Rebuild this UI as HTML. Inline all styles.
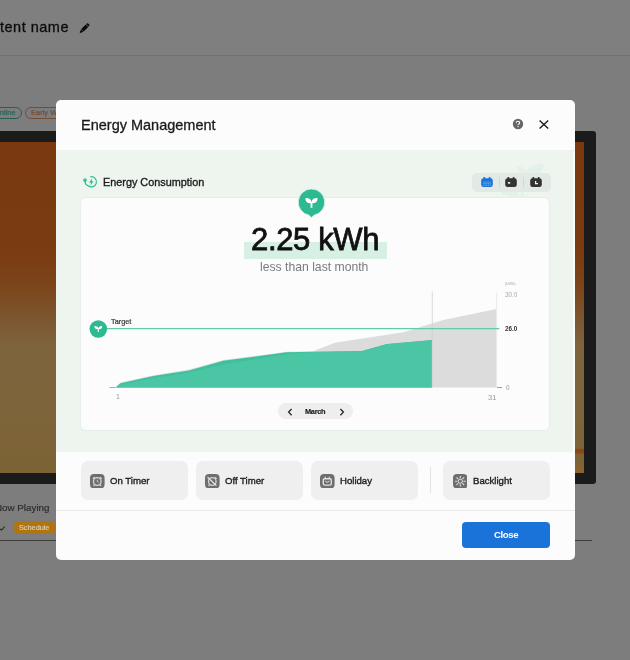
<!DOCTYPE html>
<html><head><meta charset="utf-8">
<style>
*{box-sizing:border-box;margin:0;padding:0}
html,body{width:630px;height:660px;overflow:hidden}
body{background:#fff;font-family:"Liberation Sans",sans-serif;position:relative;color:#111}
.abs{position:absolute}
.t{position:absolute;white-space:nowrap;line-height:1;will-change:transform}
#bg{position:absolute;left:0;top:0;width:630px;height:660px;background:#fafafa}
#overlay{position:absolute;left:0;top:0;width:630px;height:660px;background:rgba(0,0,0,.5)}
#modal{position:absolute;left:56px;top:100px;width:519px;height:460px;background:#fcfcfc;border-radius:5px;overflow:hidden}
.btn{position:absolute;top:361px;width:107px;height:39px;background:#efefef;border-radius:7px}
.btn .ic{position:absolute;left:9.7px;top:12.5px}
.btn .lb{will-change:transform;position:absolute;left:29.5px;top:14.5px;font-size:9.6px;line-height:1;color:#1c1c1c;white-space:nowrap;-webkit-text-stroke:.35px #1c1c1c}
</style></head><body>
<div id="bg">
  <div class="abs" style="left:0;top:0;width:630px;height:55px;background:#fff"></div>
  <div class="t" id="cname" style="left:.4px;top:20.2px;font-size:14.5px;letter-spacing:.5px;color:#151515;-webkit-text-stroke:.3px #151515">tent name</div>
  <svg class="abs" style="left:78.6px;top:22.6px" width="11" height="11" viewBox="0 0 11 11"><g transform="translate(5.4 5.3) rotate(45)" fill="#111"><path d="M-1.7 -4.2 V-5 Q-1.7 -6 -.7 -6 H.7 Q1.7 -6 1.7 -5 V-4.2 Z"/><rect x="-1.7" y="-3.7" width="3.4" height="6.4"/><path d="M-1.7 3.1 H1.7 L.3 6.2 Q0 6.8 -.3 6.2 Z"/></g></svg>
  <div class="abs" style="left:0;top:55px;width:630px;height:1px;background:#e2e2e2"></div>
  <div class="abs" style="left:-20px;top:106.5px;width:42px;height:12.5px;border:1.2px solid #4fc3a5;border-radius:7px"></div>
  <div class="t" id="online" style="left:-6px;top:109px;font-size:7.5px;color:#4fc3a5;-webkit-text-stroke:.2px #4fc3a5">Online</div>
  <div class="abs" style="left:25px;top:106.5px;width:62px;height:12.5px;border:1.2px solid #e09a68;border-radius:7px"></div>
  <div class="t" id="early" style="left:30.5px;top:109px;font-size:7.5px;color:#e09a68;-webkit-text-stroke:.2px #e09a68">Early Warning</div>
  <div class="abs" style="left:-10px;top:131px;width:606px;height:353px;background:#363636;border-radius:3px"></div>
  <div class="abs" style="left:-10px;top:142px;width:594px;height:331px;background:linear-gradient(#f4721f 0%,#f67824 34%,#f88c36 44%,#f8b062 54%,#fdc97c 62%,#fbc975 80%,#f9c66a 100%)"></div>
  <div class="t" id="nowp" style="left:-5px;top:503px;font-size:9.8px;color:#5a5a5a;-webkit-text-stroke:.2px #5a5a5a">Now Playing</div>
  <div class="abs" style="left:0;top:540px;width:592px;height:1px;background:#777"></div>
</div>
<div id="overlay"></div>
<div class="abs" style="left:575px;top:447.5px;width:9px;height:7px;background:linear-gradient(#86602e 0%,#82461a 30%,#84481b 60%,#866232 100%)"></div>
<div class="abs" style="left:575px;top:461px;width:9px;height:12px;background:linear-gradient(rgba(150,98,40,0) 0%,rgba(150,98,40,.45) 60%,rgba(150,98,40,.6) 100%)"></div>
<div class="abs" style="left:13px;top:521.2px;width:42.6px;height:12.7px;border-radius:7px;background:#b07410"></div>
<div class="t" id="sched" style="left:19px;top:524px;font-size:7.3px;color:#dccfb4;-webkit-text-stroke:.15px #dccfb4">Schedule</div>
<svg class="abs" style="left:-1px;top:525px" width="7" height="7" viewBox="0 0 7 7"><path d="M.3 3.4 L2.5 5.1 L5.8 1.5" stroke="#262626" stroke-width="1.1" fill="none"/></svg>
<div id="modal">
  <div class="t" id="title" style="left:25px;top:17.5px;font-size:14.5px;color:#1a1a1a;-webkit-text-stroke:.3px #1a1a1a">Energy Management</div>
  <!-- help -->
  <div class="abs" style="left:457.3px;top:119.5px;"></div>
  <svg class="abs" style="left:456.1px;top:18.1px" width="12" height="12" viewBox="0 0 12 12"><circle cx="6" cy="6" r="5.2" fill="#666"/><path d="M4.3 4.8 Q4.3 3.3 6 3.3 Q7.7 3.3 7.7 4.7 Q7.7 5.6 6.8 6 Q6 6.4 6 7.1" stroke="#fff" stroke-width="1.1" fill="none"/><circle cx="6" cy="8.6" r=".7" fill="#fff"/></svg>
  <svg class="abs" style="left:481.5px;top:19px" width="12" height="12" viewBox="0 0 12 12"><path d="M1.6 1.5 L10.2 9.5 M10.2 1.5 L1.6 9.5" stroke="#222" stroke-width="1.5" fill="none"/></svg>

  <div class="abs" style="left:0;top:49.5px;width:519px;height:1px;background:#e9ece9"></div>
  <div class="abs" style="left:0;top:50.3px;width:517px;height:301.5px;background:#edf5ee"></div>
  <!-- energy consumption icon -->
  <svg class="abs" style="left:27px;top:75px" width="15" height="14" viewBox="0 0 15 14">
    <path d="M2 6.4 C2 9 3.4 10 5.12 10.7 A5.1 5.1 0 1 0 7.51 1.78" stroke="#2dba92" stroke-width="1.15" fill="none" stroke-linecap="round"/>
    <path d="M0.3 4.2 L3.7 4.2 L3.7 5.3 Q3.7 7 2 7 Q0.3 7 0.3 5.3 Z" fill="#2dba92"/>
    <rect x=".8" y="3.2" width=".8" height="1.4" fill="#2dba92"/><rect x="2.4" y="3.2" width=".8" height="1.4" fill="#2dba92"/>
    <path d="M9.3 3.3 L6 7.5 L7.9 7.5 L7.3 10.5 L10.5 6.2 L8.6 6.2 Z" fill="#2dba92"/>
  </svg>
  <div class="t" id="econs" style="left:46.8px;top:76.9px;font-size:10.85px;color:#1c1c1c;-webkit-text-stroke:.35px #1c1c1c">Energy Consumption</div>

  <!-- period toggle -->
  <svg class="abs" style="left:436px;top:58px" width="60" height="42" viewBox="492 158 60 42"><g fill="rgba(45,186,146,.06)"><ellipse cx="534" cy="171" rx="11.5" ry="5" transform="rotate(-35 534 171)"/><ellipse cx="521.5" cy="170.5" rx="5.5" ry="2.8" transform="rotate(48 521.5 170.5)"/><path d="M524 176 Q522 186 520.5 197 L523 197 Q524 186 526 177 Z"/><ellipse cx="510" cy="193" rx="9" ry="3.5" transform="rotate(8 510 193)"/></g></svg>
  <div class="abs" style="left:416px;top:72.5px;width:78.5px;height:19px;border-radius:5px;background:#e3e9e4"></div>
  <div class="abs" style="left:443px;top:77px;width:1px;height:10px;background:#d2d8d3"></div>
  <div class="abs" style="left:467.3px;top:77px;width:1px;height:10px;background:#d2d8d3"></div>
  <svg class="abs" style="left:425px;top:76px" width="12" height="12" viewBox="0 0 12 12"><path d="M2.6 2.2 h6.8 a2.4 2.4 0 0 1 2.4 2.4 v4.1 a2.4 2.4 0 0 1 -2.4 2.4 h-6.8 a2.4 2.4 0 0 1 -2.4 -2.4 v-4.1 a2.4 2.4 0 0 1 2.4 -2.4 Z" fill="#1a73d9"/><rect x="2.5" y="1" width="1.7" height="2.6" rx=".6" fill="#1a73d9"/><rect x="7.8" y="1" width="1.7" height="2.6" rx=".6" fill="#1a73d9"/><g fill="#5a9ce8"><rect x="2.4" y="5.6" width="7.2" height=".7"/><rect x="2.4" y="7.3" width="7.2" height=".7"/><rect x="2.4" y="9" width="7.2" height=".7"/><rect x="2.4" y="5.6" width=".7" height="4.1"/><rect x="4.6" y="5.6" width=".7" height="4.1"/><rect x="6.8" y="5.6" width=".7" height="4.1"/><rect x="8.9" y="5.6" width=".7" height="4.1"/></g></svg>
  <svg class="abs" style="left:449.3px;top:76px" width="12" height="12" viewBox="0 0 12 12"><path d="M2.6 2.2 h6.8 a2.4 2.4 0 0 1 2.4 2.4 v4.1 a2.4 2.4 0 0 1 -2.4 2.4 h-6.8 a2.4 2.4 0 0 1 -2.4 -2.4 v-4.1 a2.4 2.4 0 0 1 2.4 -2.4 Z" fill="#333"/><rect x="2.5" y="1" width="1.7" height="2.6" rx=".6" fill="#333"/><rect x="7.8" y="1" width="1.7" height="2.6" rx=".6" fill="#333"/><rect x="2.9" y="6" width="2.3" height="1.7" fill="#e8e8e8"/></svg>
  <svg class="abs" style="left:473.7px;top:76px" width="12" height="12" viewBox="0 0 12 12"><path d="M2.6 2.2 h6.8 a2.4 2.4 0 0 1 2.4 2.4 v4.1 a2.4 2.4 0 0 1 -2.4 2.4 h-6.8 a2.4 2.4 0 0 1 -2.4 -2.4 v-4.1 a2.4 2.4 0 0 1 2.4 -2.4 Z" fill="#333"/><rect x="2.5" y="1" width="1.7" height="2.6" rx=".6" fill="#333"/><rect x="7.8" y="1" width="1.7" height="2.6" rx=".6" fill="#333"/><path d="M5.6 4.9 V7.6 H8" stroke="#f4f4f4" stroke-width="1.3" fill="none"/></svg>

  <!-- card -->
  <div class="abs" style="left:25px;top:97.5px;width:468.4px;height:232.8px;background:#fbfcfb;border-radius:4.5px;box-shadow:0 0 1.5px rgba(60,110,80,.18)"></div>
  <!-- leaf badge -->
  <svg class="abs" style="left:241.4px;top:87.5px" width="29" height="31" viewBox="0 0 29 31">
    <path d="M14.5 1 A13.2 13.2 0 0 1 17 27.16 L14.9 29.2 Q14.5 29.6 14.1 29.2 L12 27.16 A13.2 13.2 0 0 1 14.5 1 Z" fill="#2dba92" stroke="#d4f1e5" stroke-width=".8"/>
    <path d="M14.5 14.2 Q14.2 9.8 8.4 9.9 Q8.2 15.2 13.6 15.3 L13.6 19.8 L15.4 19.8 L15.4 15.3 Q20.8 15.2 20.6 9.9 Q14.8 9.8 14.5 14.2 Z" fill="#fff"/>
  </svg>
  <!-- big number -->
  <div class="abs" style="left:187.7px;top:142.3px;width:143.3px;height:16.4px;background:#d6f0e4"></div>
  <div class="t" id="big" style="left:195px;top:124.4px;font-size:31px;letter-spacing:-.35px;color:#111;-webkit-text-stroke:.8px #111">2.25 kWh</div>
  <div class="t" id="sub" style="left:204.3px;top:160.5px;font-size:12.2px;color:#7b7b7b">less than last month</div>

  <!-- chart -->
  <svg class="abs" style="left:0;top:180px" width="519" height="130" viewBox="56 280 519 130">
    <polygon points="115.5,387.5 120.5,382.6 153.5,375.2 189,369.6 223.3,360 286.7,351.8 313,351.2 335,342.7 403.3,332.3 443.3,320 496.5,309 496.5,387.5" fill="#dcdcdc"/>
    <polygon points="115.5,387.5 120.5,383.2 153.5,376 189,370.5 223.3,360.8 286.7,352.3 313,351.7 361.7,351 386.7,344 432,340 432,387.5" fill="#3fc09c"/>
    <polygon points="116.5,387.5 121.5,384.6 153.5,378 189,372.6 223.3,364.6 286.7,354.2 313,351.9 361.7,351.2 386.7,344.2 432,340.2 432,387.5" fill="#4ac6a4"/>
    <line x1="432.3" y1="291.5" x2="432.3" y2="387.5" stroke="#cfcfcf" stroke-width=".8"/>
    <line x1="496.6" y1="293" x2="496.6" y2="387.5" stroke="#e9e9e9" stroke-width="1"/>
    <line x1="109.5" y1="387.5" x2="115.5" y2="387.5" stroke="#ababab" stroke-width="1"/>
    <line x1="497" y1="387.5" x2="502" y2="387.5" stroke="#9a9a9a" stroke-width="1"/>
    <line x1="106" y1="328.6" x2="499.3" y2="328.6" stroke="#62cbab" stroke-width="1.1"/>
    <circle cx="98.3" cy="329" r="8.8" fill="#2dba92"/>
    <path transform="translate(98.3 329) scale(.62) translate(-14.5 -15.2)" d="M14.5 14.8 Q14.3 10.4 8.2 10.4 Q8.2 15.6 13.6 15.6 L13.6 20 L15.4 20 L15.4 15.6 Q20.8 15.6 20.8 10.4 Q14.7 10.4 14.5 14.8 Z" fill="#fff"/>
  </svg>
  <div class="t" id="target" style="left:55px;top:218px;font-size:7.3px;color:#333;-webkit-text-stroke:.2px #333">Target</div>
  <div class="t" style="left:449px;top:181.5px;font-size:4px;color:#aaa">(kWh)</div>
  <div class="t" id="l30" style="left:449px;top:191.5px;font-size:6.3px;color:#aaa">30.0</div>
  <div class="t" id="l26" style="left:449px;top:226px;font-size:6.3px;color:#333;font-weight:bold">26.0</div>
  <div class="t" id="l0" style="left:449.5px;top:284.5px;font-size:6.3px;color:#999">0</div>
  <div class="t" id="d1" style="left:59.8px;top:292.8px;font-size:7px;color:#999">1</div>
  <div class="t" id="d31" style="left:432.2px;top:293.9px;font-size:7.6px;color:#999">31</div>

  <!-- month picker -->
  <div class="abs" style="left:222px;top:303.4px;width:75.4px;height:16px;border-radius:8px;background:#eeeeee"></div>
  <svg class="abs" style="left:231px;top:307.5px" width="6" height="8" viewBox="0 0 6 8"><path d="M4.6 1 L1.6 4.1 L4.6 7.2" stroke="#222" stroke-width="1.3" fill="none"/></svg>
  <svg class="abs" style="left:282.5px;top:307.5px" width="6" height="8" viewBox="0 0 6 8"><path d="M1.4 1 L4.4 4.1 L1.4 7.2" stroke="#222" stroke-width="1.3" fill="none"/></svg>
  <div class="t" id="march" style="left:249.2px;top:307.8px;font-size:7.4px;letter-spacing:-.3px;font-weight:bold;color:#1a1a1a;-webkit-text-stroke:.15px #1a1a1a">March</div>

  <!-- buttons -->
  <div class="btn" style="left:24.5px"><svg class="ic" width="14.6" height="14.4" viewBox="0 0 14.6 14.4"><rect x="0" y="0" width="14.6" height="14.4" rx="4" fill="#6e6e6e"/><circle cx="7.3" cy="7.5" r="3.8" stroke="#d6d6d6" stroke-width="1.3" fill="none"/><path d="M7.3 5.7 V7.6 L8.6 8.4" stroke="#dcdcdc" stroke-width=".9" fill="none"/><path d="M3.3 4.4 L4.3 3.5 M11.3 4.4 L10.3 3.5 M3.9 11.5 L4.4 10.9 M10.7 11.5 L10.2 10.9" stroke="#d6d6d6" stroke-width="1.3" stroke-linecap="round"/></svg><div class="lb" id="b1">On Timer</div></div>
  <div class="btn" style="left:139.5px"><svg class="ic" width="14.6" height="14.4" viewBox="0 0 14.6 14.4"><rect x="0" y="0" width="14.6" height="14.4" rx="4" fill="#6e6e6e"/><circle cx="7.3" cy="7.5" r="3.8" stroke="#d6d6d6" stroke-width="1.3" fill="none"/><path d="M2.9 3.5 L11 11.3" stroke="#e4e4e4" stroke-width="1.2" stroke-linecap="round"/><path d="M11.3 4.4 L10.3 3.5 M3.9 11.5 L4.4 10.9" stroke="#d6d6d6" stroke-width="1.3" stroke-linecap="round"/></svg><div class="lb" id="b2">Off Timer</div></div>
  <div class="btn" style="left:254.5px"><svg class="ic" width="14.6" height="14.4" viewBox="0 0 14.6 14.4"><rect x="0" y="0" width="14.6" height="14.4" rx="4" fill="#6e6e6e"/><rect x="3.3" y="4.7" width="8" height="6.4" rx="1.4" stroke="#e0e0e0" stroke-width="1.4" fill="none"/><path d="M5.3 3 V4.4 M9.3 3 V4.4" stroke="#e2e2e2" stroke-width="1.1" stroke-linecap="round"/><path d="M5.5 7.4 Q7.3 9.6 9.1 7.4" stroke="#e2e2e2" stroke-width="1" fill="none" stroke-linecap="round"/></svg><div class="lb" id="b3">Holiday</div></div>
  <div class="abs" style="left:374px;top:367px;width:1px;height:26px;background:#e4e4e4"></div>
  <div class="btn" style="left:387px"><svg class="ic" width="14.6" height="14.4" viewBox="0 0 14.6 14.4"><rect x="0" y="0" width="14.6" height="14.4" rx="4" fill="#6e6e6e"/><circle cx="7.3" cy="7.2" r="2.1" stroke="#e2e2e2" stroke-width="1" fill="none"/><path d="M10.80 7.20 L12.20 7.20 M9.77 9.67 L10.76 10.66 M7.30 10.70 L7.30 12.10 M4.83 9.67 L3.84 10.66 M3.80 7.20 L2.40 7.20 M4.83 4.73 L3.84 3.74 M7.30 3.70 L7.30 2.30 M9.77 4.73 L10.76 3.74 " stroke="#e2e2e2" stroke-width="1.1" stroke-linecap="round"/></svg><div class="lb" id="b4">Backlight</div></div>

  <div class="abs" style="left:0;top:410px;width:519px;height:1px;background:#e9e9e9"></div>
  <div class="abs" style="left:406.3px;top:422.3px;width:87.8px;height:25.7px;background:#1a73d9;border-radius:4px"></div>
  <div class="t" id="close" style="left:438px;top:430px;font-size:9.6px;letter-spacing:-.4px;font-weight:bold;color:#fff">Close</div>
</div>
</body></html>
